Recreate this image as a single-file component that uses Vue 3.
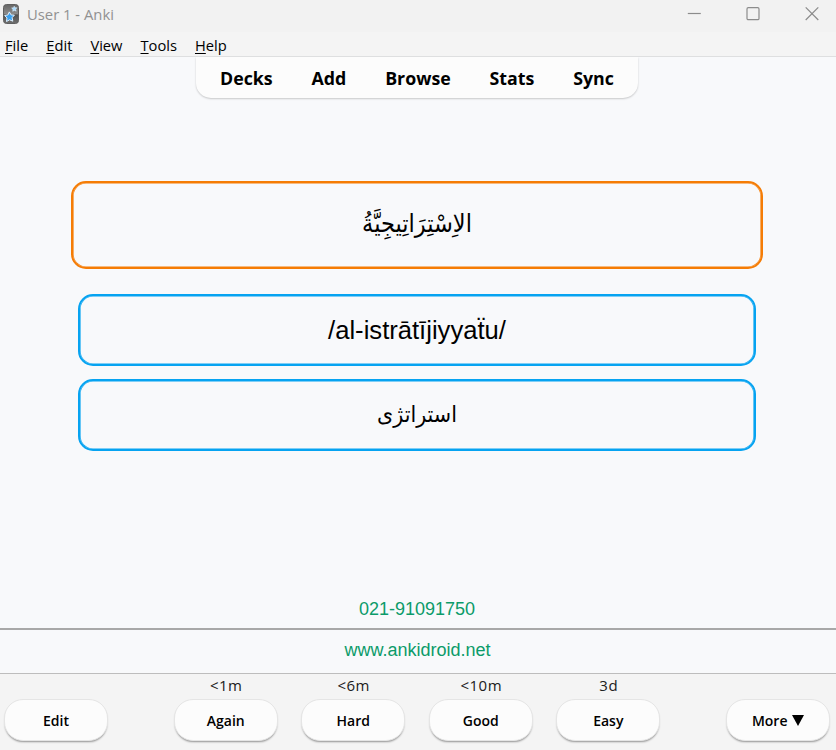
<script setup>
import { ref } from 'vue';

const menus = ['File', 'Edit', 'View', 'Tools', 'Help'];
const links = ['Decks', 'Add', 'Browse', 'Stats', 'Sync'];

const answers = [
  { label: 'Again', due: '<1m' },
  { label: 'Hard', due: '<6m' },
  { label: 'Good', due: '<10m' },
  { label: 'Easy', due: '3d' }
];

const card = ref({
  word: 'الاِسْتِرَاتِيجِيَّةُ',
  reading: '/al-istrātījiyyaẗu/',
  meaning: 'استراتژی'
});
</script>

<template>
  <div class="window">
    <header class="title-bar">
      <svg class="app-icon" width="16" height="20" viewBox="0 0 16 20">
        <defs>
          <linearGradient id="iconBg" x1="0" y1="0" x2="0" y2="1">
            <stop offset="0" stop-color="#666" />
            <stop offset="0.48" stop-color="#8a8a8a" />
            <stop offset="0.55" stop-color="#505050" />
            <stop offset="1" stop-color="#707070" />
          </linearGradient>
        </defs>
        <rect x="0.5" y="0.5" width="15" height="19" rx="3" fill="url(#iconBg)" stroke="#606060" />
        <path d="M6.3 7.9l1.8 3 3.3.2-2.3 2.6.7 3.5-3.2-1.4-3.1 1.7.5-3.6-2.4-2.4 3.4-.6z" fill="#3ba0ee" stroke="#e4f3ff" stroke-width="1" stroke-linejoin="round" />
        <path d="M11.2 2.2l.9 1.5 1.9.1-1.3 1.5.5 1.9-1.8-.8-1.7.9.3-1.9-1.4-1.4 1.9-.3z" fill="#a9dcff" stroke="#e4f3ff" stroke-width=".5" />
      </svg>
      <span class="title">User 1 - Anki</span>
      <div class="controls">
        <svg width="14" height="14" viewBox="0 0 14 14"><path d="M.8 6.5h13" /></svg>
        <svg width="14" height="14" viewBox="0 0 14 14"><rect x="1" y=".7" width="12" height="12" rx="1.3" /></svg>
        <svg width="14" height="14" viewBox="0 0 14 14"><path d="M.7.4l12.6 12.6M13.3.4L.7 13" /></svg>
      </div>
    </header>

    <nav class="menu-bar">
      <span v-for="menu in menus" :key="menu" class="menu"><span class="accel">{{ menu[0] }}</span>{{ menu.slice(1) }}</span>
    </nav>

    <main class="review">
      <nav class="toolbar">
        <a v-for="link in links" :key="link">{{ link }}</a>
      </nav>

      <section class="card">
        <div class="box word" dir="rtl" lang="ar">{{ card.word }}</div>
        <div class="box reading">{{ card.reading }}</div>
        <div class="box meaning" dir="rtl" lang="fa">{{ card.meaning }}</div>
      </section>

      <section class="contact">
        <div class="phone">021-91091750</div>
        <div class="site">www.ankidroid.net</div>
      </section>
    </main>

    <footer class="bottom-bar">
      <button class="btn">Edit</button>
      <div class="answers">
        <div v-for="answer in answers" :key="answer.label" class="answer">
          <span class="due">{{ answer.due }}</span>
          <button class="btn">{{ answer.label }}</button>
        </div>
      </div>
      <button class="btn">More <svg class="arrow" width="12" height="11" viewBox="0 0 12 11"><path d="M0 0h12L6 11z" /></svg></button>
    </footer>
  </div>
</template>

<style>
body {
  margin: 0;
  overflow: hidden;
}
</style>

<style scoped>
.window {
  display: flex;
  flex-direction: column;
  height: 750px;
  box-sizing: border-box;
  background: #f8f9fb;
  color: #000;
  font-family: 'Open Sans', 'Noto Sans', sans-serif;
}

.title-bar {
  display: flex;
  align-items: center;
  height: 32px;
  padding: 0 17px 4px 3px;
  box-sizing: border-box;
  background: #f2f2f2;
  flex-shrink: 0;
}

.title {
  margin-left: 8px;
  font-size: 14.8px;
  line-height: 20px;
  color: #919191;
}

.controls {
  display: flex;
  gap: 45px;
  margin-left: auto;
}

.controls svg {
  fill: none;
  stroke: #8c8c8c;
  stroke-width: 1.2;
}

.menu-bar {
  display: flex;
  gap: 18px;
  height: 25px;
  padding-left: 5px;
  border-bottom: 1px solid #dedfe0;
  box-sizing: border-box;
  background: #f4f4f4;
  font-size: 14.7px;
  line-height: 26px;
  flex-shrink: 0;
}

.accel {
  text-decoration: underline;
  text-decoration-thickness: 1px;
  text-underline-offset: 2px;
}

.review {
  display: flex;
  flex-direction: column;
  align-items: center;
  flex: 1;
  padding-right: 2px;
}

.toolbar {
  display: flex;
  justify-content: space-between;
  width: 442px;
  height: 41px;
  padding: 0 24px;
  box-sizing: border-box;
  border-radius: 0 0 15px 15px;
  background: #fcfcfc;
  box-shadow: 0 1px 2px rgba(0, 0, 0, 0.2);
  clip-path: inset(0 -4px -4px -4px);
  font-size: 17.8px;
  font-weight: 700;
  line-height: 42px;
}

.card {
  display: flex;
  flex-direction: column;
  align-items: center;
  margin-top: 83px;
}

.box {
  display: flex;
  align-items: center;
  justify-content: center;
  width: 678px;
  height: 72px;
  box-sizing: border-box;
  border: 2px solid #06a3f1;
  border-radius: 15px;
  box-shadow: inset 0 0 0 0.6px #06a3f1;
  font-family: 'Liberation Sans', sans-serif;
}

.word {
  width: 692px;
  height: 88px;
  margin-bottom: 25px;
  padding-bottom: 4px;
  border-color: #f57c05;
  box-shadow: inset 0 0 0 0.6px #f57c05;
  font-family: 'DejaVu Sans Condensed', 'DejaVu Sans', sans-serif;
  font-stretch: condensed;
  font-size: 25px;
}

.reading {
  margin-bottom: 13px;
  font-size: 25.6px;
}

.meaning {
  padding-bottom: 2px;
  font-family: 'DejaVu Sans Condensed', 'DejaVu Sans', sans-serif;
  font-stretch: condensed;
  font-size: 23px;
}

.contact {
  align-self: stretch;
  margin-top: auto;
  margin-right: -2px;
  font-family: 'Liberation Sans', sans-serif;
  font-size: 18px;
  color: #0b9b69;
  text-align: center;
}

.phone {
  height: 40px;
  padding-right: 2px;
  border-bottom: 2px solid #a8a8a8;
  line-height: 42px;
}

.site {
  height: 43px;
  padding-right: 1px;
  line-height: 41px;
}

.bottom-bar {
  display: flex;
  align-items: flex-end;
  justify-content: space-between;
  height: 77px;
  padding: 0 6px 9px 4px;
  border-top: 1px solid #bdbdbd;
  box-sizing: border-box;
  background: #f4f4f4;
  flex-shrink: 0;
}

.answers {
  display: flex;
  gap: 23.5px;
}

.answer {
  display: flex;
  flex-direction: column;
  align-items: center;
}

.due {
  margin-bottom: 4px;
  padding-left: 1px;
  font-size: 15px;
  line-height: 20px;
  letter-spacing: 0.5px;
  color: #202020;
}

.btn {
  width: 104px;
  height: 42px;
  padding: 0;
  border: 1px solid #e5e5e5;
  border-radius: 19px;
  background: #fcfcfc;
  box-shadow: 0 2px 2px -1px rgba(0, 0, 0, 0.4);
  color: #000;
  font-family: inherit;
  font-size: 14px;
  font-weight: 600;
}

.arrow {
  margin-left: 1px;
}
</style>
